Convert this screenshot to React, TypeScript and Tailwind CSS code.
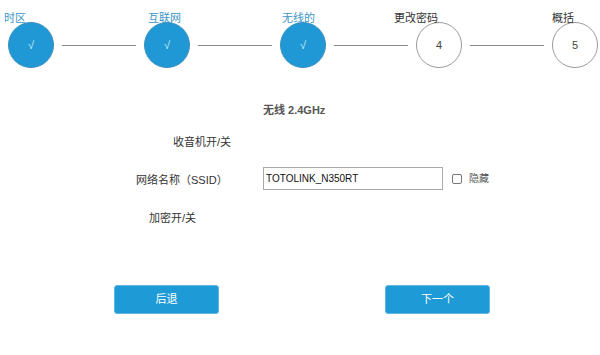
import { Fragment } from 'react';

const steps = [
  { label: '时区', mark: '√', done: true, offset: 'left-[-4px]' },
  { label: '互联网', mark: '√', done: true, offset: 'left-[4px]' },
  { label: '无线的', mark: '√', done: true, offset: 'left-[2px]' },
  { label: '更改密码', mark: '4', done: false, offset: 'left-[-22px]' },
  { label: '概括', mark: '5', done: false, offset: 'left-[0px]' },
];

const font = { fontFamily: '"Liberation Sans", "Noto Sans CJK SC", sans-serif' };

const Step = ({
  label,
  mark,
  done,
  offset,
}: {
  label: string;
  mark: string;
  done: boolean;
  offset: string;
}) => (
  <div className="relative h-[46px] w-[46px] shrink-0">
    <div
      className={
        done
          ? 'flex h-full w-full items-center justify-center rounded-full border border-[#3d8fbf] bg-[#1f98d5] text-[11px] text-[#d8eef9]'
          : 'flex h-full w-full items-center justify-center rounded-full border border-[#9a9a9a] bg-white text-[11px] text-[#444]'
      }
    >
      {mark}
    </div>
    <span
      className={
        (done ? 'text-[#3a95c8] ' : 'text-[#333] ') +
        'absolute top-[-11px] whitespace-nowrap text-[11px] leading-[14px] ' +
        offset
      }
    >
      {label}
    </span>
  </div>
);

const App = () => {
  return (
    <div className="h-[355px] w-[600px] overflow-hidden bg-white" style={font}>
      <div className="flex items-center gap-[8px] pl-[8px] pt-[22px]">
        {steps.map((s, i) => (
          <Fragment key={s.label}>
            <Step {...s} />
            {i < steps.length - 1 && <div className="h-px w-[74px] bg-[#8a8a8a]" />}
          </Fragment>
        ))}
      </div>

      <p className="mt-[34px] pl-[263px] text-[11px] font-bold leading-[17px] text-[#555]">
        无线 2.4GHz
      </p>

      <p className="mt-[15px] pl-[173px] text-[11px] leading-[17px] text-[#333]">收音机开/关</p>

      <div className="mt-[16px] flex items-center">
        <span className="ml-[136px] w-[127px] pt-[4px] text-[11px] leading-[17px] text-[#333]">
          网络名称（SSID）
        </span>
        <div className="flex h-[23px] w-[180px] items-center border border-[#a9a9a9] px-[2px] text-[10px] text-[#111]">
          TOTOLINK_N350RT
        </div>
        <div className="ml-[9px] h-[10px] w-[10px] rounded-[2px] border border-[#767676] bg-white" />
        <span className="ml-[7px] text-[10px] text-[#555]">隐藏</span>
      </div>

      <p className="mt-[20px] pl-[149px] text-[11px] leading-[17px] text-[#333]">加密开/关</p>

      <div className="mt-[58px] flex">
        <button className="ml-[114px] h-[29px] w-[105px] rounded-[3px] border border-[#5fb6e2] bg-[#1e9ad6] text-[11px] text-white">
          后退
        </button>
        <button className="ml-[166px] h-[29px] w-[105px] rounded-[3px] border border-[#5fb6e2] bg-[#1e9ad6] text-[11px] text-white">
          下一个
        </button>
      </div>
    </div>
  );
};

export default App;
